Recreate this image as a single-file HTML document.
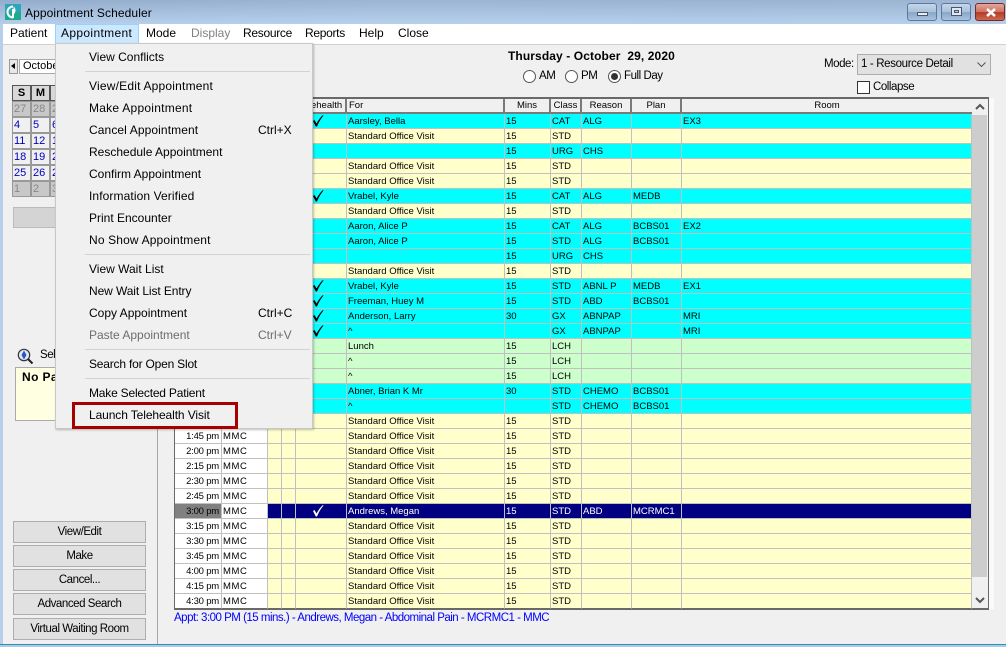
<!DOCTYPE html>
<html><head><meta charset="utf-8"><title>Appointment Scheduler</title>
<style>
html,body{margin:0;padding:0}
body{width:1006px;height:647px;overflow:hidden;position:relative;background:#f0f0f0;font-family:"Liberation Sans",sans-serif;color:#000}
.a{position:absolute;white-space:nowrap}
#tb{left:0;top:0;width:1006px;height:24px;background:linear-gradient(90deg,#8fa9c9 0,#a3bbd8 40%,#9db6d4 70%,#a3bad6 100%)}
#tb2{left:0;top:0;width:1006px;height:24px;background:linear-gradient(180deg,rgba(150,175,205,.5),rgba(185,210,238,.9))}
#mb{left:3px;top:24px;width:1003px;height:20px;background:#fff;border-bottom:1px solid #d0d0d0}
.m{top:26px;font-size:12px;line-height:15px}
.wb{top:3px;width:30px;height:18px;border-radius:3px;box-sizing:border-box;border:1px solid #5d7a9e;background:linear-gradient(180deg,#c4d6ea 0,#a9c0da 50%,#88a6c8 52%,#a9c2dd 100%)}
#grid{left:174px;top:97px;width:813px;height:509px;border:1px solid #696969;border-width:2px 1px 2px 1px;background:#f0f0f0}
table{border-collapse:separate;border-spacing:0;table-layout:fixed;position:absolute}
#t{left:175px;top:114px;width:797px;font-size:9.5px}
#t td{height:12px;line-height:12px;padding:2px 0 0 1px;border-right:1px solid #c0c0c0;border-bottom:1px solid #c0c0c0;overflow:hidden;white-space:nowrap;box-sizing:content-box;background:#ffc}
#t td:first-child{text-align:right;background:#fff;padding:2px 2px 0 0;letter-spacing:-.2px}
#t td:nth-child(2){background:#fff;letter-spacing:.6px}
#t tr.c td:nth-child(n+3){background:#0ff}
#t tr.g td:nth-child(n+3){background:#cfc}
#t tr.s td:nth-child(n+3){background:#000080;color:#fff}
#t tr.s td:first-child{background:#808080}
#t tr:last-child td{border-bottom-color:#696969}
#h{left:175px;top:99px;width:797px;font-size:9.5px}
#h td{height:13px;padding:0;background:#f0f0f0;text-align:center;border-right:2px solid #7a7a7a;border-bottom:2px solid #7a7a7a;box-sizing:content-box;overflow:hidden;white-space:nowrap;line-height:13px}
#cal{left:11px;top:85px;width:60px;font-size:11px}
.cl{position:absolute;box-sizing:border-box;width:19px;height:16px;border:1px solid #999;line-height:14px;padding-left:1px;color:#0000c0;background:#f0f0f0}
.ch{background:#d8d8d8;color:#000;font-weight:bold;border:1px solid #555;text-align:center;padding:0;font-size:11px}
.cg{background:#c8c8c8;color:#888}
.bt{left:13px;width:133px;height:22px;box-sizing:border-box;background:#e1e1e1;border:1px solid #adadad;text-align:center;font-size:11.5px;letter-spacing:-.45px;line-height:20px}
#menu{left:55px;top:43px;width:258px;height:386px;background:#f0f0f0;border:1px solid #c8c8c8;box-sizing:border-box;box-shadow:1px 1px 2px rgba(0,0,0,.25)}
.i{left:89px;font-size:12px;line-height:15px;color:#000}
.k{left:258px;font-size:12px;line-height:15px}
.sp{left:85px;width:225px;height:1px;background:#d2d2d2}
.d{color:#6d6d6d}
.f{font-size:11.5px;letter-spacing:-.45px;line-height:15px}
</style></head><body>
<div class="a" id="tb"></div><div class="a" id="tb2"></div>
<div class="a" style="left:0;top:24px;width:3px;height:620px;background:#b6cfea"></div>
<div class="a" style="left:0;top:644px;width:1006px;height:3px;background:#aacbe8;border-top:1px solid #2f8fb8;box-sizing:border-box"></div>
<svg class="a" style="left:5px;top:4px" width="16" height="16" viewBox="0 0 16 16"><rect width="16" height="16" fill="#1fa98f"/><rect width="16" height="8" fill="#2aa7b8"/><path d="M8 2.500a5.500 5.500 0 1 0 0 11" fill="none" stroke="#fff" stroke-width="2"/><path d="M8.500 2.500a5 5 0 0 1 0 8z" fill="#fff"/><rect x="7" y="5" width="2" height="9" fill="#fff"/></svg>
<div class="a" style="left:25px;top:5px;font-size:12px;line-height:16px;letter-spacing:.1px">Appointment Scheduler</div>
<div class="a wb" style="left:907px"><div class="a" style="left:9px;top:8px;width:11px;height:4px;background:#e8eef5;border:1px solid #47586e;box-sizing:border-box"></div></div>
<div class="a wb" style="left:941px"><div class="a" style="left:9px;top:3px;width:11px;height:9px;border:1px solid #47586e;box-sizing:border-box;background:#dfe8f2"><div style="width:5px;height:3px;margin:2px;border:1px solid #47586e;box-sizing:border-box;background:#b9cbe0"></div></div></div>
<div class="a wb" style="left:975px;border-color:#7a2a22;background:linear-gradient(180deg,#e0a79c 0,#d0705e 50%,#b53a25 52%,#cc6a52 100%)"><svg class="a" style="left:8px;top:3px" width="14" height="11" viewBox="0 0 14 11"><path d="M3 2l8 7M11 2l-8 7" stroke="#fff" stroke-width="2.500"/></svg></div>

<div class="a" id="mb"></div>
<div class="a" style="left:55px;top:24px;width:84px;height:20px;background:#cce8ff;border:1px solid #99d1ff;box-sizing:border-box"></div>
<div class="a m" style="left:10px">Patient</div>
<div class="a m" style="left:61px;letter-spacing:.35px">Appointment</div>
<div class="a m" style="left:146px">Mode</div>
<div class="a m" style="left:191px;color:#808080">Display</div>
<div class="a m" style="left:243px;letter-spacing:-.3px">Resource</div>
<div class="a m" style="left:305px;letter-spacing:-.3px">Reports</div>
<div class="a m" style="left:359px">Help</div>
<div class="a m" style="left:398px">Close</div>

<!-- left panel -->
<div class="a" style="left:157px;top:44px;width:1px;height:600px;background:#a8a8a8"></div>
<div class="a" style="left:9px;top:59px;width:9px;height:15px;border:1px solid #999;background:#e8e8e8;box-sizing:border-box"><div class="a" style="left:1px;top:3px;border:3.5px solid transparent;border-right:4px solid #000;border-left:0"></div></div>
<div class="a" style="left:19px;top:59px;width:50px;height:15px;background:#fff;border:1px solid #aaa;box-sizing:border-box;font-size:11px;line-height:13px;padding-left:3px">October</div>
<div class="a" id="cal">
<div class="cl ch" style="left:1px;top:0">S</div><div class="cl ch" style="left:20px;top:0">M</div><div class="cl ch" style="left:39px;top:0">T</div>
<div class="cl cg" style="left:1px;top:16px">27</div><div class="cl cg" style="left:20px;top:16px">28</div><div class="cl cg" style="left:39px;top:16px">29</div>
<div class="cl" style="left:1px;top:32px">4</div><div class="cl" style="left:20px;top:32px">5</div><div class="cl" style="left:39px;top:32px">6</div>
<div class="cl" style="left:1px;top:48px">11</div><div class="cl" style="left:20px;top:48px">12</div><div class="cl" style="left:39px;top:48px">13</div>
<div class="cl" style="left:1px;top:64px">18</div><div class="cl" style="left:20px;top:64px">19</div><div class="cl" style="left:39px;top:64px">20</div>
<div class="cl" style="left:1px;top:80px">25</div><div class="cl" style="left:20px;top:80px">26</div><div class="cl" style="left:39px;top:80px">27</div>
<div class="cl cg" style="left:1px;top:96px">1</div><div class="cl cg" style="left:20px;top:96px">2</div><div class="cl cg" style="left:39px;top:96px">3</div>
</div>
<div class="a" style="left:13px;top:207px;width:133px;height:21px;background:#d4d4d4;border:1px solid #bbb;box-sizing:border-box;text-align:center;font-size:11px;line-height:19px;color:#777">Open</div>
<svg class="a" style="left:17px;top:348px" width="17" height="17" viewBox="0 0 17 17"><circle cx="7" cy="7" r="5.700" fill="#dfeaf7" stroke="#333" stroke-width="1.200"/><path d="M7 2.500l2.500 4.500L7 11.500 4.500 7z" fill="#2a55c0"/><path d="M11 11l4.500 4.500" stroke="#222" stroke-width="2"/></svg>
<div class="a f" style="left:40px;top:348px">Select</div>
<div class="a" style="left:15px;top:367px;width:100px;height:54px;background:#ffffe1;border:1px solid #aaa;box-sizing:border-box;font-size:12px;font-weight:bold;line-height:15px;padding:2px 0 0 6px;letter-spacing:.4px">No Patient</div>
<div class="a bt" style="top:521px">View/Edit</div>
<div class="a bt" style="top:545px">Make</div>
<div class="a bt" style="top:569px">Cancel...</div>
<div class="a bt" style="top:593px">Advanced Search</div>
<div class="a bt" style="top:618px">Virtual Waiting Room</div>

<!-- top controls -->
<div class="a" style="left:508px;top:49px;font-size:12px;font-weight:bold;line-height:15px;letter-spacing:.1px;white-space:pre">Thursday - October  29, 2020</div>
<div class="a" style="left:523px;top:70px;width:13px;height:13px;border:1px solid #555;border-radius:50%;box-sizing:border-box;background:#fff"></div>
<div class="a f" style="left:539px;top:69px">AM</div>
<div class="a" style="left:565px;top:70px;width:13px;height:13px;border:1px solid #555;border-radius:50%;box-sizing:border-box;background:#fff"></div>
<div class="a f" style="left:581px;top:69px">PM</div>
<div class="a" style="left:608px;top:70px;width:13px;height:13px;border:1px solid #555;border-radius:50%;box-sizing:border-box;background:#fff"><div class="a" style="left:2px;top:2px;width:7px;height:7px;border-radius:50%;background:#333"></div></div>
<div class="a f" style="left:624px;top:69px">Full Day</div>
<div class="a f" style="left:824px;top:57px">Mode:</div>
<div class="a" style="left:857px;top:54px;width:134px;height:21px;background:#e1e1e1;border:1px solid #adadad;box-sizing:border-box;font-size:11.5px;letter-spacing:-.35px;line-height:19px;padding-left:3px">1 - Resource Detail</div>
<svg class="a" style="left:977px;top:62px" width="9" height="6" viewBox="0 0 9 6"><path d="M.5 .5L4.500 4.500 8.500 .5" fill="none" stroke="#555"/></svg>
<div class="a" style="left:857px;top:81px;width:13px;height:13px;background:#fff;border:1px solid #333;box-sizing:border-box"></div>
<div class="a f" style="left:873px;top:80px">Collapse</div>

<!-- grid -->
<div class="a" style="left:989px;top:98px;width:5px;height:511px;background:#fafafa"></div>
<div class="a" id="grid"></div>
<table id="h"><colgroup><col style="width:47px"><col style="width:46px"><col style="width:14px"><col style="width:14px"><col style="width:51px"><col style="width:158px"><col style="width:46px"><col style="width:31px"><col style="width:50px"><col style="width:50px"><col style="width:290px"></colgroup><tr><td>Time</td><td>Res</td><td></td><td></td><td>Telehealth</td><td style="text-align:left;padding-left:2px">For</td><td>Mins</td><td>Class</td><td>Reason</td><td>Plan</td><td style="border-right:0">Room</td></tr></table>
<table id="t"><colgroup><col style="width:47px"><col style="width:46px"><col style="width:14px"><col style="width:14px"><col style="width:51px"><col style="width:158px"><col style="width:46px"><col style="width:31px"><col style="width:50px"><col style="width:50px"><col style="width:290px"></colgroup>
<tr class="c"><td>8:00 am</td><td>MMC</td><td></td><td></td><td></td><td>Aarsley, Bella</td><td>15</td><td>CAT</td><td>ALG</td><td></td><td>EX3</td></tr>
<tr><td>8:15 am</td><td>MMC</td><td></td><td></td><td></td><td>Standard Office Visit</td><td>15</td><td>STD</td><td></td><td></td><td></td></tr>
<tr class="c"><td>8:30 am</td><td>MMC</td><td></td><td></td><td></td><td></td><td>15</td><td>URG</td><td>CHS</td><td></td><td></td></tr>
<tr><td>8:45 am</td><td>MMC</td><td></td><td></td><td></td><td>Standard Office Visit</td><td>15</td><td>STD</td><td></td><td></td><td></td></tr>
<tr><td>9:00 am</td><td>MMC</td><td></td><td></td><td></td><td>Standard Office Visit</td><td>15</td><td>STD</td><td></td><td></td><td></td></tr>
<tr class="c"><td>9:15 am</td><td>MMC</td><td></td><td></td><td></td><td>Vrabel, Kyle</td><td>15</td><td>CAT</td><td>ALG</td><td>MEDB</td><td></td></tr>
<tr><td>9:30 am</td><td>MMC</td><td></td><td></td><td></td><td>Standard Office Visit</td><td>15</td><td>STD</td><td></td><td></td><td></td></tr>
<tr class="c"><td>9:45 am</td><td>MMC</td><td></td><td></td><td></td><td>Aaron, Alice P</td><td>15</td><td>CAT</td><td>ALG</td><td>BCBS01</td><td>EX2</td></tr>
<tr class="c"><td>10:00 am</td><td>MMC</td><td></td><td></td><td></td><td>Aaron, Alice P</td><td>15</td><td>STD</td><td>ALG</td><td>BCBS01</td><td></td></tr>
<tr class="c"><td>10:15 am</td><td>MMC</td><td></td><td></td><td></td><td></td><td>15</td><td>URG</td><td>CHS</td><td></td><td></td></tr>
<tr><td>10:30 am</td><td>MMC</td><td></td><td></td><td></td><td>Standard Office Visit</td><td>15</td><td>STD</td><td></td><td></td><td></td></tr>
<tr class="c"><td>10:45 am</td><td>MMC</td><td></td><td></td><td></td><td>Vrabel, Kyle</td><td>15</td><td>STD</td><td>ABNL P</td><td>MEDB</td><td>EX1</td></tr>
<tr class="c"><td>11:00 am</td><td>MMC</td><td></td><td></td><td></td><td>Freeman, Huey M</td><td>15</td><td>STD</td><td>ABD</td><td>BCBS01</td><td></td></tr>
<tr class="c"><td>11:15 am</td><td>MMC</td><td></td><td></td><td></td><td>Anderson, Larry</td><td>30</td><td>GX</td><td>ABNPAP</td><td></td><td>MRI</td></tr>
<tr class="c"><td>11:30 am</td><td>MMC</td><td></td><td></td><td></td><td>^</td><td></td><td>GX</td><td>ABNPAP</td><td></td><td>MRI</td></tr>
<tr class="g"><td>11:45 am</td><td>MMC</td><td></td><td></td><td></td><td>Lunch</td><td>15</td><td>LCH</td><td></td><td></td><td></td></tr>
<tr class="g"><td>12:00 pm</td><td>MMC</td><td></td><td></td><td></td><td>^</td><td>15</td><td>LCH</td><td></td><td></td><td></td></tr>
<tr class="g"><td>12:15 pm</td><td>MMC</td><td></td><td></td><td></td><td>^</td><td>15</td><td>LCH</td><td></td><td></td><td></td></tr>
<tr class="c"><td>12:30 pm</td><td>MMC</td><td></td><td></td><td></td><td>Abner, Brian K Mr</td><td>30</td><td>STD</td><td>CHEMO</td><td>BCBS01</td><td></td></tr>
<tr class="c"><td>1:00 pm</td><td>MMC</td><td></td><td></td><td></td><td>^</td><td></td><td>STD</td><td>CHEMO</td><td>BCBS01</td><td></td></tr>
<tr><td>1:30 pm</td><td>MMC</td><td></td><td></td><td></td><td>Standard Office Visit</td><td>15</td><td>STD</td><td></td><td></td><td></td></tr>
<tr><td>1:45 pm</td><td>MMC</td><td></td><td></td><td></td><td>Standard Office Visit</td><td>15</td><td>STD</td><td></td><td></td><td></td></tr>
<tr><td>2:00 pm</td><td>MMC</td><td></td><td></td><td></td><td>Standard Office Visit</td><td>15</td><td>STD</td><td></td><td></td><td></td></tr>
<tr><td>2:15 pm</td><td>MMC</td><td></td><td></td><td></td><td>Standard Office Visit</td><td>15</td><td>STD</td><td></td><td></td><td></td></tr>
<tr><td>2:30 pm</td><td>MMC</td><td></td><td></td><td></td><td>Standard Office Visit</td><td>15</td><td>STD</td><td></td><td></td><td></td></tr>
<tr><td>2:45 pm</td><td>MMC</td><td></td><td></td><td></td><td>Standard Office Visit</td><td>15</td><td>STD</td><td></td><td></td><td></td></tr>
<tr class="s"><td>3:00 pm</td><td>MMC</td><td></td><td></td><td></td><td>Andrews, Megan</td><td>15</td><td>STD</td><td>ABD</td><td>MCRMC1</td><td></td></tr>
<tr><td>3:15 pm</td><td>MMC</td><td></td><td></td><td></td><td>Standard Office Visit</td><td>15</td><td>STD</td><td></td><td></td><td></td></tr>
<tr><td>3:30 pm</td><td>MMC</td><td></td><td></td><td></td><td>Standard Office Visit</td><td>15</td><td>STD</td><td></td><td></td><td></td></tr>
<tr><td>3:45 pm</td><td>MMC</td><td></td><td></td><td></td><td>Standard Office Visit</td><td>15</td><td>STD</td><td></td><td></td><td></td></tr>
<tr><td>4:00 pm</td><td>MMC</td><td></td><td></td><td></td><td>Standard Office Visit</td><td>15</td><td>STD</td><td></td><td></td><td></td></tr>
<tr><td>4:15 pm</td><td>MMC</td><td></td><td></td><td></td><td>Standard Office Visit</td><td>15</td><td>STD</td><td></td><td></td><td></td></tr>
<tr><td>4:30 pm</td><td>MMC</td><td></td><td></td><td></td><td>Standard Office Visit</td><td>15</td><td>STD</td><td></td><td></td><td></td></tr>
</table>
<!-- checks -->
<svg class="a" style="left:312px;top:114px" width="12" height="225" viewBox="0 0 12 225"><g fill="#000"><path d="M1 7l1.500-1 2 3.500C6.500 6 8.500 3 11 1l.5.500C9 4.500 6.800 8 5 12.500H3.800z"/><path transform="translate(0 75)" d="M1 7l1.500-1 2 3.500C6.500 6 8.500 3 11 1l.5.500C9 4.500 6.800 8 5 12.500H3.800z"/><path transform="translate(0 165)" d="M1 7l1.500-1 2 3.500C6.500 6 8.500 3 11 1l.5.500C9 4.500 6.800 8 5 12.500H3.800z"/><path transform="translate(0 180)" d="M1 7l1.500-1 2 3.500C6.500 6 8.500 3 11 1l.5.500C9 4.500 6.800 8 5 12.500H3.800z"/><path transform="translate(0 195)" d="M1 7l1.500-1 2 3.500C6.500 6 8.500 3 11 1l.5.500C9 4.500 6.800 8 5 12.500H3.800z"/><path transform="translate(0 210)" d="M1 7l1.500-1 2 3.500C6.500 6 8.500 3 11 1l.5.500C9 4.500 6.800 8 5 12.500H3.800z"/></g></svg>
<svg class="a" style="left:312px;top:504px" width="12" height="14" viewBox="0 0 12 14"><path fill="#fff" d="M1 7l1.500-1 2 3.500C6.500 6 8.500 3 11 1l.5.500C9 4.500 6.800 8 5 12.500H3.800z"/></svg>
<!-- scrollbar -->
<div class="a" style="left:972px;top:99px;width:16px;height:509px;background:#f0f0f0"></div>
<div class="a" style="left:972px;top:115px;width:15px;height:462px;background:#cdcdcd"></div>
<svg class="a" style="left:975px;top:103px" width="10" height="8" viewBox="0 0 10 8"><path d="M1 6l4-4 4 4" fill="none" stroke="#555" stroke-width="2"/></svg>
<svg class="a" style="left:975px;top:596px" width="10" height="8" viewBox="0 0 10 8"><path d="M1 2l4 4 4-4" fill="none" stroke="#555" stroke-width="2"/></svg>
<div class="a" style="left:174px;top:611px;font-size:11.5px;letter-spacing:-.5px;line-height:15px;color:#0000ff">Appt: 3:00 PM (15 mins.) - Andrews, Megan - Abdominal Pain - MCRMC1 - MMC</div>

<!-- menu -->
<div class="a" id="menu"></div>
<div class="a i" style="top:50px">View Conflicts</div>
<div class="a sp" style="top:71px"></div>
<div class="a i" style="top:79px;letter-spacing:.2px">View/Edit Appointment</div>
<div class="a i" style="top:101px;letter-spacing:.25px">Make Appointment</div>
<div class="a i" style="top:123px;letter-spacing:.1px">Cancel Appointment</div><div class="a k" style="top:123px">Ctrl+X</div>
<div class="a i" style="top:145px">Reschedule Appointment</div>
<div class="a i" style="top:167px">Confirm Appointment</div>
<div class="a i" style="top:189px;letter-spacing:.1px">Information Verified</div>
<div class="a i" style="top:211px">Print Encounter</div>
<div class="a i" style="top:233px;letter-spacing:.15px">No Show Appointment</div>
<div class="a sp" style="top:254px"></div>
<div class="a i" style="top:262px">View Wait List</div>
<div class="a i" style="top:284px;letter-spacing:-.1px">New Wait List Entry</div>
<div class="a i" style="top:306px">Copy Appointment</div><div class="a k" style="top:306px">Ctrl+C</div>
<div class="a i d" style="top:328px">Paste Appointment</div><div class="a k d" style="top:328px">Ctrl+V</div>
<div class="a sp" style="top:349px"></div>
<div class="a i" style="top:357px;letter-spacing:-.2px">Search for Open Slot</div>
<div class="a sp" style="top:378px"></div>
<div class="a i" style="top:386px;letter-spacing:-.2px">Make Selected Patient</div>
<div class="a i" style="top:408px;letter-spacing:-.1px">Launch Telehealth Visit</div>
<div class="a" style="left:72px;top:402px;width:166px;height:27px;border:3px solid #a80000;box-sizing:border-box"></div>
</body></html>
